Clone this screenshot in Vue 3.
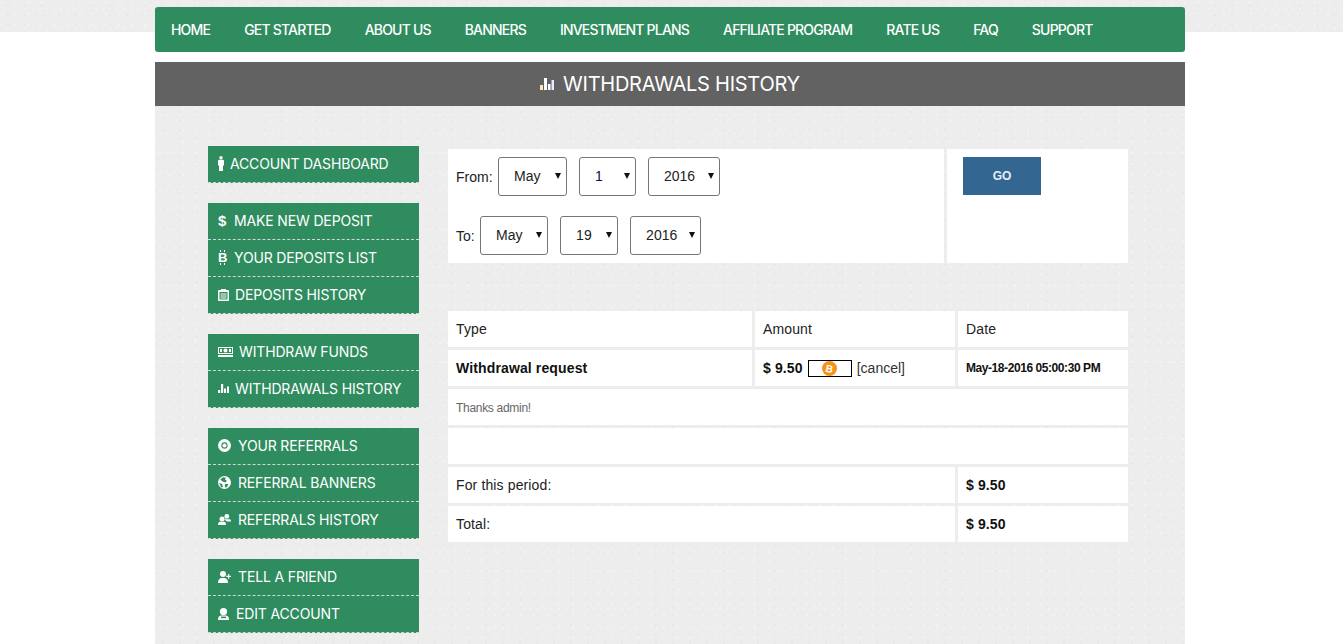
<script setup>
const nav = ['HOME', 'GET STARTED', 'ABOUT US', 'BANNERS', 'INVESTMENT PLANS', 'AFFILIATE PROGRAM', 'RATE US', 'FAQ', 'SUPPORT']
const groups = [
  [{ t: 'ACCOUNT DASHBOARD', i: 'male', w: 12 }],
  [
    { t: 'MAKE NEW DEPOSIT', i: 'dollar', w: 16 },
    { t: 'YOUR DEPOSITS LIST', i: 'btc', w: 16 },
    { t: 'DEPOSITS HISTORY', i: 'clip', w: 17 },
  ],
  [
    { t: 'WITHDRAW FUNDS', i: 'money', w: 21 },
    { t: 'WITHDRAWALS HISTORY', i: 'bars', w: 17 },
  ],
  [
    { t: 'YOUR REFERRALS', i: 'disc', w: 20 },
    { t: 'REFERRAL BANNERS', i: 'globe', w: 20 },
    { t: 'REFERRALS HISTORY', i: 'users', w: 20 },
  ],
  [
    { t: 'TELL A FRIEND', i: 'plus', w: 20 },
    { t: 'EDIT ACCOUNT', i: 'user', w: 18 },
  ],
]
</script>

<template>
  <div class="page">
    <div class="wrap">
      <nav class="nav">
        <a v-for="n in nav" :key="n" class="nav-link">{{ n }}</a>
      </nav>
      <h1 class="title">
        <svg class="title-ico" viewBox="0 0 14 12" width="14" height="12">
          <rect x="0" y="7" width="3" height="5" fill="#ffe9b0" />
          <rect x="4" y="0" width="3" height="12" fill="#fff" />
          <rect x="8" y="6" width="2.5" height="6" fill="#fff" />
          <rect x="11.5" y="2" width="2.5" height="10" fill="#f2e6ff" />
        </svg>
        WITHDRAWALS HISTORY
      </h1>
      <div class="content">
        <aside class="side">
          <ul v-for="(g, gi) in groups" :key="gi" class="group">
            <li v-for="it in g" :key="it.t" class="item">
              <span class="ico" :style="{ width: it.w + 'px' }">
                <svg v-if="it.i === 'male'" viewBox="0 0 6 15" width="6" height="15">
                  <circle cx="3" cy="1.7" r="1.7" fill="#fff" />
                  <path d="M0 5q0-1.200 1.200-1.200h3.600Q6 3.800 6 5v4.500H5V15H1V9.500H0z" fill="#fff" />
                </svg>
                <span v-else-if="it.i === 'dollar'" class="glyph">$</span>
                <span v-else-if="it.i === 'btc'" class="glyph btc">B</span>
                <svg v-else-if="it.i === 'clip'" viewBox="0 0 11 13" width="11" height="13">
                  <path d="M1 2h2V1h5v1h2q1 0 1 1v9q0 1-1 1H1q-1 0-1-1V3q0-1 1-1z" fill="#fff" />
                  <path d="M1.500 4h8v7.500h-8z" fill="#2f8c5f" />
                  <path d="M2.500 5.500h6v1h-6zM2.500 7.500h6v1h-6zM2.500 9.500h6v1h-6z" fill="#fff" />
                </svg>
                <svg v-else-if="it.i === 'money'" viewBox="0 0 15 10" width="15" height="10">
                  <path d="M0 0h15v7H0z" fill="#fff" />
                  <path d="M1 1h13v5H1z" fill="#2f8c5f" />
                  <circle cx="7.500" cy="3.500" r="2" fill="#fff" />
                  <path d="M2 2h2v3H2zM11 2h2v3h-2z" fill="#fff" />
                  <path d="M0 8h15v2H0z" fill="#fff" />
                </svg>
                <svg v-else-if="it.i === 'bars'" viewBox="0 0 11 9" width="11" height="9">
                  <path d="M0 6h2.200v3H0zM3 0h2.200v9H3zM6 4.500h2v4.500H6zM9 2.500h2V9H9z" fill="#fff" />
                </svg>
                <svg v-else-if="it.i === 'disc'" viewBox="0 0 13 13" width="13" height="13">
                  <circle cx="6.500" cy="6.500" r="6.500" fill="#fff" />
                  <circle cx="6.500" cy="6.500" r="2.600" fill="none" stroke="#2f8c5f" stroke-width="1.100" />
                </svg>
                <svg v-else-if="it.i === 'globe'" viewBox="0 0 13 13" width="13" height="13">
                  <circle cx="6.500" cy="6.500" r="6.500" fill="#fff" />
                  <path d="M5 1.200 8 1.800 7 3.800 9 4.800 7.400 6.600 4.600 5.400 2.200 3.600zM7 8h3.200L9 11 7.600 11.800 6.800 10zM1 7l3 1 1 3-1.600.6z" fill="#2f8c5f" />
                </svg>
                <svg v-else-if="it.i === 'users'" viewBox="0 0 13 11" width="13" height="11">
                  <circle cx="8.800" cy="2.400" r="2.400" fill="#fff" />
                  <path d="M6 5.200h6q1 .4 1 2.200H9z" fill="#fff" />
                  <circle cx="4" cy="5" r="2.500" fill="#fff" />
                  <path d="M0 11q0-3 2-3.200h4q2 .2 2 3.200z" fill="#fff" />
                </svg>
                <svg v-else-if="it.i === 'plus'" viewBox="0 0 13 12" width="13" height="12">
                  <circle cx="5" cy="3" r="3" fill="#fff" />
                  <path d="M0 12q0-4 3-5h4q3 1 3 5z" fill="#fff" />
                  <path d="M10 3h1.200v1.800H13V6h-1.800v1.800H10V6H8.200V4.800H10z" fill="#fff" />
                </svg>
                <svg v-else-if="it.i === 'user'" viewBox="0 0 11 12" width="11" height="12">
                  <circle cx="5.500" cy="3.600" r="3.600" fill="#fff" />
                  <path d="M0 12q0-4 3-4.400h5q3 .4 3 4.400z" fill="#fff" />
                  <path d="M3 8.600h5v1.600H3z" fill="#2f8c5f" />
                </svg>
              </span>
              <span class="item-text">{{ it.t }}</span>
            </li>
          </ul>
        </aside>
        <main class="main">
          <form class="filter" @submit.prevent>
            <div class="filter-left">
              <div class="date-row">
                <label class="lbl">From:</label>
                <span class="sel w69"><select><option>May</option></select></span>
                <span class="sel w57"><select class="blue"><option>1</option></select></span>
                <span class="sel w72"><select><option>2016</option></select></span>
              </div>
              <div class="date-row">
                <label class="lbl">To:</label>
                <span class="sel w68"><select><option>May</option></select></span>
                <span class="sel w58"><select><option>19</option></select></span>
                <span class="sel w71"><select><option>2016</option></select></span>
              </div>
            </div>
            <div class="filter-right">
              <button class="go">GO</button>
            </div>
          </form>
          <div class="tbl">
            <div class="c">Type</div>
            <div class="c">Amount</div>
            <div class="c">Date</div>
            <div class="c b">Withdrawal request</div>
            <div class="c amt">
              <b>$ 9.50</b>
              <span class="paybox">
                <svg viewBox="0 0 16 16" width="15" height="15">
                  <circle cx="8" cy="8" r="8" fill="#f7931a" />
                  <text x="8" y="12" text-anchor="middle" class="coin" transform="rotate(12 8 8)">B</text>
                </svg>
              </span>
              <a class="cancel">[cancel]</a>
            </div>
            <div class="c date">May-18-2016 05:00:30 PM</div>
            <div class="c span3 note">Thanks admin!</div>
            <div class="c span3"></div>
            <div class="c span2">For this period:</div>
            <div class="c b">$ 9.50</div>
            <div class="c span2">Total:</div>
            <div class="c b">$ 9.50</div>
          </div>
        </main>
      </div>
    </div>
  </div>
</template>

<style>
html, body { margin: 0; background: #fff; overflow: hidden; }
</style>

<style scoped>
.page {
  height: 644px;
  overflow: hidden;
  box-sizing: border-box;
  padding-top: 7px;
  background:
    linear-gradient(transparent 32px, #fff 32px),
    radial-gradient(circle at 2px 3px, #f2f2f2 1.2px, transparent 1.6px) 0 0 / 13px 11px,
    radial-gradient(circle at 8px 6px, #e8e8e8 1px, transparent 1.4px) 0 0 / 17px 9px,
    radial-gradient(circle at 5px 9px, #f1f1f1 1px, transparent 1.4px) 0 0 / 7px 19px,
    #ededed;
  font-family: "Liberation Sans", Arial, sans-serif;
  font-size: 14px;
  color: #222;
}
.wrap { width: 1030px; margin-left: 155px; }
.nav {
  height: 45px;
  background: #2f8c5f;
  border-radius: 3px;
  display: flex;
  align-items: center;
  gap: 34px;
  padding-left: 16px;
  box-sizing: border-box;
}
.nav-link {
  font-family: Inter, "Open Sans", sans-serif;
  font-size: 14px;
  font-weight: 500;
  letter-spacing: -0.81px;
  color: #fff;
  white-space: nowrap;
}
.title {
  margin: 10px 0 0;
  height: 44px;
  background: #626262;
  color: #fff;
  display: flex;
  align-items: center;
  justify-content: center;
  gap: 9px;
  font-family: Inter, "Open Sans", sans-serif;
  font-size: 20px;
  font-weight: 400;
  letter-spacing: -0.25px;
}
.content {
  height: 538px;
  box-sizing: border-box;
  padding: 40px 57px 0 53px;
  display: flex;
  gap: 29px;
  background:
    radial-gradient(circle at 2px 3px, #f2f2f2 1.2px, transparent 1.6px) 0 0 / 13px 11px,
    radial-gradient(circle at 8px 6px, #e8e8e8 1px, transparent 1.4px) 0 0 / 17px 9px,
    radial-gradient(circle at 5px 9px, #f1f1f1 1px, transparent 1.4px) 0 0 / 7px 19px,
    #ededed;
}
.side { width: 211px; flex: none; display: flex; flex-direction: column; gap: 20px; }
.group { list-style: none; margin: 0; padding: 0; background: #2f8c5f; }
.item {
  height: 37px;
  box-sizing: border-box;
  border-bottom: 1px dashed #cfd8d2;
  display: flex;
  align-items: center;
  padding: 0 0 1px 10px;
  color: #fff;
  font-family: Inter, "Open Sans", sans-serif;
  font-size: 14px;
  letter-spacing: -0.15px;
  white-space: nowrap;
}
.ico { flex: none; display: flex; align-items: center; height: 14px; }
.glyph { font-family: "Liberation Sans", sans-serif; font-weight: 700; font-size: 15px; letter-spacing: 0; }
.btc { position: relative; font-size: 13px; }
.btc::before, .btc::after {
  content: "";
  position: absolute;
  left: 2px;
  width: 3px;
  height: 2px;
  border-left: 1px solid #fff;
  border-right: 1px solid #fff;
}
.btc::before { top: 0; }
.btc::after { bottom: 0; }
.main { width: 680px; flex: none; padding-top: 3px; }
.filter { display: flex; gap: 3px; height: 114px; margin: 0; }
.filter-left { width: 496px; background: #fff; box-sizing: border-box; padding: 8px 0 0 8px; }
.filter-right { width: 181px; background: #fff; box-sizing: border-box; padding: 8px 0 0 16px; }
.date-row { display: flex; align-items: center; height: 39px; margin-bottom: 20px; gap: 12px; }
.lbl { margin-right: -6.6px; }
.sel { display: block; position: relative; height: 39px; flex: none; }
.w69 { width: 69px; } .w57 { width: 57px; } .w72 { width: 72px; }
.w68 { width: 68px; } .w58 { width: 58px; } .w71 { width: 71px; }
.sel::after {
  content: "";
  position: absolute;
  right: 6px;
  top: 16px;
  border-left: 3.5px solid transparent;
  border-right: 3.5px solid transparent;
  border-top: 6px solid #111;
  pointer-events: none;
}
select {
  appearance: none;
  width: 100%;
  height: 100%;
  box-sizing: border-box;
  border: 1px solid #767676;
  border-radius: 3px;
  background: #fff;
  padding: 0 0 2px 15px;
  font: 14px "Liberation Sans", Arial, sans-serif;
  color: #222;
}
.blue { color: #113; }
.go {
  width: 78px;
  height: 38px;
  border: 0;
  background: #336691;
  color: #e8eef3;
  font: 700 12px "Liberation Sans", Arial, sans-serif;
  padding: 0;
}
.tbl {
  margin-top: 48px;
  display: grid;
  grid-template-columns: 304px 200px 170px;
  grid-auto-rows: 36px;
  gap: 3px;
}
.c {
  background: #fff;
  display: flex;
  align-items: center;
  padding-left: 8px;
  white-space: nowrap;
  min-width: 0;
  letter-spacing: 0.13px;
}
.b { font-weight: 700; color: #111; }
.amt b { color: #111; }
.date { font-weight: 700; font-size: 12px; color: #111; letter-spacing: -0.43px; }
.note { font-size: 12px; color: #666; letter-spacing: -0.3px; padding-top: 2px; box-sizing: border-box; }
.span3 { grid-column: span 3; }
.span2 { grid-column: span 2; }
.paybox {
  margin-left: 5px;
  width: 44px;
  height: 17px;
  box-sizing: border-box;
  border: 1px solid #000;
  display: flex;
  align-items: center;
  justify-content: center;
}
.coin { font: 700 11px "Liberation Sans", sans-serif; fill: #fff; }
.cancel { margin-left: 5px; color: #333; letter-spacing: 0; }
</style>
